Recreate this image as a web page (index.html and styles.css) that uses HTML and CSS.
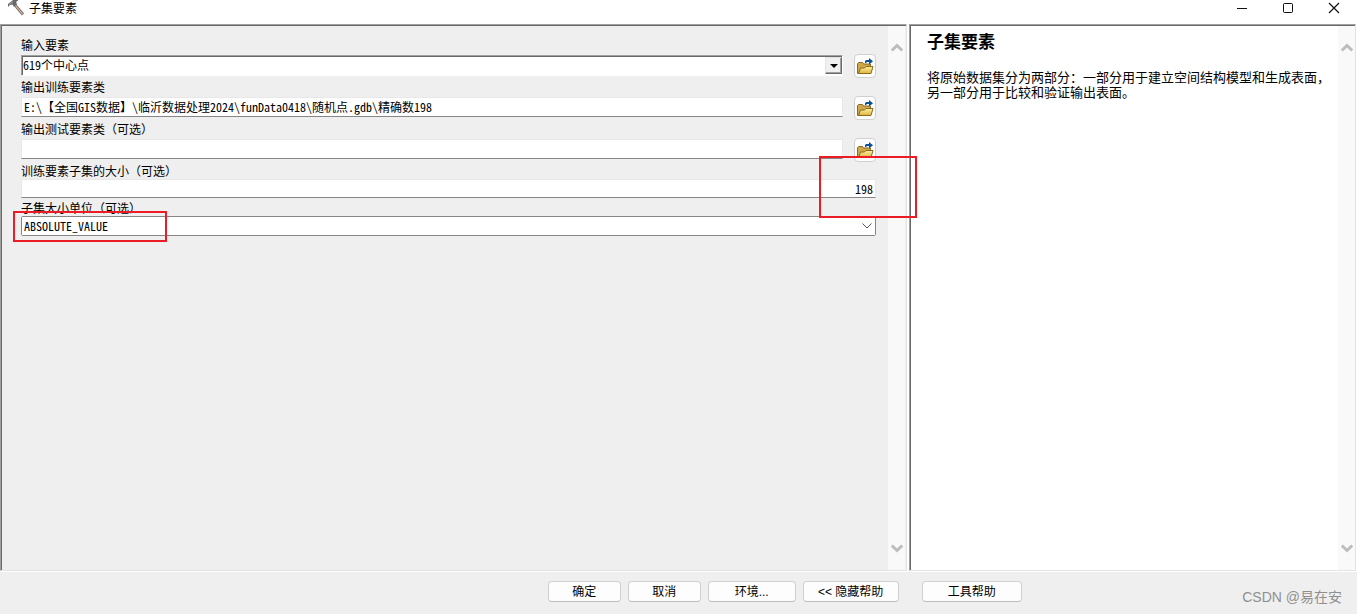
FILE: index.html
```
<!DOCTYPE html>
<html lang="zh-CN">
<head>
<meta charset="utf-8">
<title>子集要素</title>
<link rel="stylesheet" href="styles.css">
</head>
<body>
<svg class="defs" aria-hidden="true">
  <defs>
    <linearGradient id="gold" x1="0" y1="0" x2="0" y2="1">
      <stop offset="0" stop-color="#fdf0a0"/>
      <stop offset="1" stop-color="#dcb540"/>
    </linearGradient>
    <symbol id="folder" viewBox="0 0 18 18">
      <path d="M1.500 16.500V6.500l1-1h4l1 1.500h7v9.500z" fill="#cfa84a" stroke="#8a6a2a"/>
      <path d="M2.500 16.500l2-5.500h4l1.500-1.500h7l-2 7z" fill="url(#gold)" stroke="#8a6a1c"/>
      <path d="M9 6V4.500Q9 3 10.500 3H13V1l4 3.200L13 7.500V5h-2.500V6z" fill="#0b4f97"/>
    </symbol>
    <symbol id="up" viewBox="0 0 12 9"><path d="M.8 7.500L6 2.500l5.200 5" fill="none" stroke="#bdbdbd" stroke-width="3"/></symbol>
    <symbol id="down" viewBox="0 0 12 9"><path d="M.8 1.500L6 6.500l5.200-5" fill="none" stroke="#bdbdbd" stroke-width="3"/></symbol>
  </defs>
</svg>
<header class="titlebar">
  <svg class="app-icon" viewBox="0 0 18 18" aria-hidden="true">
    <path d="M8 5l8 9.500" stroke="#8a7768" stroke-width="3"/>
    <path d="M8 5l7.500 9" stroke="#d8c8b8" stroke-width="1"/>
    <path d="M1 7V4l5-4 5-1v1.500L9 2l1 2-3 3-1.500-2.500L3 5z" fill="#66696b"/>
    <path d="M2 4.500l4-3" stroke="#a5a8aa"/>
  </svg>
  <h1 class="title">子集要素</h1>
  <div class="window-buttons">
    <button class="window-button" aria-label="最小化"><svg viewBox="0 0 12 12"><path d="M1 6.500h10" stroke="#111"/></svg></button>
    <button class="window-button" aria-label="最大化"><svg viewBox="0 0 12 12"><rect x="1.500" y="1.500" width="9" height="9" rx="1" fill="none" stroke="#111"/></svg></button>
    <button class="window-button" aria-label="关闭"><svg viewBox="0 0 12 12"><path d="M1 1l10 10M11 1L1 11" stroke="#111" stroke-width="1.200"/></svg></button>
  </div>
</header>
<main class="panes">
  <section class="pane pane-form">
    <form class="form" id="tool">
      <div class="field with-browse">
        <label class="label" for="in">输入要素</label>
        <div class="control classic">
          <select class="input" id="in"><option>619个中心点</option></select>
          <span class="drop"><svg viewBox="0 0 8 4"><path d="M0 0h8L4 4z"/></svg></span>
        </div>
        <button type="button" class="browse" aria-label="浏览输入要素"><svg><use href="#folder"/></svg></button>
      </div>
      <div class="field with-browse">
        <label class="label" for="train">输出训练要素类</label>
        <input class="input line" id="train" type="text" value="E:\【全国GIS数据】\临沂数据处理2024\funData0418\随机点.gdb\精确数198">
        <button type="button" class="browse" aria-label="浏览输出训练要素类"><svg><use href="#folder"/></svg></button>
      </div>
      <div class="field with-browse">
        <label class="label" for="test">输出测试要素类（可选）</label>
        <input class="input line" id="test" type="text">
        <button type="button" class="browse" aria-label="浏览输出测试要素类"><svg><use href="#folder"/></svg></button>
      </div>
      <div class="field compact">
        <label class="label" for="size">训练要素子集的大小（可选）</label>
        <input class="input line number" id="size" type="text" value="198">
        <span class="mark mark-size"></span>
      </div>
      <div class="field compact">
        <label class="label" for="unit">子集大小单位（可选）</label>
        <div class="control modern">
          <select class="input code" id="unit"><option>ABSOLUTE_VALUE</option></select>
          <svg class="chevron" viewBox="0 0 10 6"><path d="M.5.5L5 5 9.500.5" fill="none" stroke="#555"/></svg>
        </div>
        <span class="mark mark-unit"></span>
      </div>
    </form>
    <div class="scrollbar"><svg><use href="#up"/></svg><svg><use href="#down"/></svg></div>
  </section>
  <section class="pane pane-help">
    <article class="help">
      <h2 class="help-title">子集要素</h2>
      <p class="help-text">将原始数据集分为两部分：一部分用于建立空间结构模型和生成表面，另一部分用于比较和验证输出表面。</p>
    </article>
    <div class="scrollbar"><svg><use href="#up"/></svg><svg><use href="#down"/></svg></div>
  </section>
</main>
<footer class="footer">
  <div class="actions actions-main">
    <button class="button" form="tool">确定</button>
    <button class="button">取消</button>
    <button class="button medium">环境...</button>
    <button class="button wide">&lt;&lt; 隐藏帮助</button>
  </div>
  <div class="actions actions-help">
    <button class="button wider">工具帮助</button>
  </div>
  <span class="watermark">CSDN @易在安</span>
</footer>
</body>
</html>
```
FILE: styles.css
```
* { box-sizing: border-box; }

body {
  margin: 0;
  min-height: 100vh;
  display: flex;
  flex-direction: column;
  background: #efefef;
  color: #000;
  font: 12px/18px "Liberation Sans", "Noto Sans CJK SC", sans-serif;
}

button, input, select { font: inherit; color: inherit; }
svg { display: block; }
.defs { position: absolute; width: 0; height: 0; }

.titlebar {
  display: flex;
  align-items: flex-start;
  height: 24px;
  padding-left: 7px;
  background: #fff;
}
.app-icon { width: 18px; height: 18px; margin-right: 4px; overflow: visible; }
.title { margin: 0; font-size: 12px; font-weight: 400; line-height: 18px; }
.window-buttons { display: flex; margin-left: auto; }
.window-button {
  width: 46px;
  height: 16px;
  padding: 0;
  border: 0;
  background: none;
}
.window-button svg { width: 12px; height: 12px; margin: 0 auto; }

.panes, .footer {
  display: grid;
  grid-template-columns: 908fr 447fr;
  padding-right: 1px;
}
.panes { flex: 1; column-gap: 1px; border-bottom: 1px solid #fff; background: #fff; }
.pane {
  display: flex;
  border: 1px solid #a0a0a0;
  border-right-color: #e3e3e3;
  border-bottom-color: #e3e3e3;
  box-shadow: inset 1px 1px #696969;
  padding: 1px 0 0 1px;
}
.pane-form { background: #efefef; margin-right: 1px; padding-right: 1px; }
.pane-help { background: #fff; }

.scrollbar {
  display: flex;
  flex-direction: column;
  justify-content: space-between;
  align-items: center;
  width: 17px;
  padding: 17px 0;
  background: #f9f9f9;
}
.scrollbar svg { width: 12px; height: 9px; }

.form { flex: 1; padding: 10px 11px 0 19px; }
.field { position: relative; display: grid; padding-right: 1px; }
.with-browse {
  grid-template-columns: 1fr 22px;
  grid-template-rows: 18px 24px;
  column-gap: 11px;
}
.with-browse .label { grid-column: 1 / 3; }
.compact { grid-template-rows: 17px 20px; }
.label { padding-top: 1px; line-height: 18px; }

.input {
  width: 100%;
  height: 20px;
  padding: 0 2px;
  border: 0;
  border-radius: 0;
  outline: 0;
  background: #fff;
  font-family: "Noto Sans Mono CJK SC", "Liberation Serif", "Noto Sans CJK SC", serif;
  line-height: 18px;
  appearance: none;
}
.line { border: 1px solid #e8e8e8; border-bottom-color: #868686; padding-bottom: 1px; }
.with-browse .line { margin-top: 1px; }
.compact .line { height: 19px; }
.number { text-align: right; }

.control { display: grid; grid-template-columns: 1fr auto; }
.control > * { grid-row: 1; }
.control .input { grid-column: 1 / 3; }
.classic {
  height: 21px;
  margin-top: 1px;
  border: 1px solid #a0a0a0;
  border-right-color: #fff;
  border-bottom-color: #fff;
  box-shadow: inset 1px 1px #696969;
  padding: 1px 0 0 1px;
}
.classic .input { height: 18px; padding: 0 0 2px; line-height: 16px; }
.drop {
  grid-column: 2;
  display: grid;
  place-items: center;
  width: 17px;
  height: 17px;
  border: 1px solid #e3e3e3;
  border-right-color: #696969;
  border-bottom-color: #696969;
  box-shadow: inset -1px -1px #a0a0a0;
  background: #f0f0f0;
  pointer-events: none;
}
.drop svg { width: 8px; height: 4px; }

.modern {
  height: 20px;
  border: 1px solid #868686;
  border-radius: 2px;
  background: #fff;
}
.modern .input { height: 18px; padding-bottom: 1px; }
.chevron {
  grid-column: 2;
  align-self: center;
  width: 10px;
  height: 6px;
  margin-right: 3px;
  pointer-events: none;
}

.browse {
  height: 24px;
  padding: 0 0 0 1px;
  border: 1px solid #d0d0d0;
  border-radius: 4px;
  background: #fdfdfd;
}
.browse svg { width: 18px; height: 18px; }

.mark { position: absolute; border: 2px solid #ed1c24; pointer-events: none; }
.mark-size { top: -6px; right: -40px; width: 98px; height: 62px; z-index: 1; }
.mark-unit { top: 12px; left: -8px; width: 154px; height: 31px; }

.help { flex: 1; padding: 7px 0 0 16px; }
.help-title { margin: 0 0 17px; font-size: 17px; line-height: 20px; }
.help-text { margin: 0; font-size: 13px; line-height: 15px; }

.footer { position: relative; min-height: 42px; padding-top: 9px; }
.actions { display: flex; align-items: flex-start; gap: 7px; }
.actions-main { justify-content: flex-end; padding-right: 10px; }
.actions-help { padding-left: 13px; }
.button {
  width: 73px;
  height: 21px;
  padding: 1px 0 0;
  border: 1px solid #d0d0d0;
  border-bottom-color: #bcbcbc;
  border-radius: 4px;
  background: #fdfdfd;
  line-height: 18px;
}
.medium { width: 88px; }
.wide { width: 96px; }
.wider { width: 100px; }
.watermark {
  position: absolute;
  right: 15px;
  bottom: 7px;
  color: #8f8f8f;
  font-size: 14px;
  line-height: 20px;
}
```
